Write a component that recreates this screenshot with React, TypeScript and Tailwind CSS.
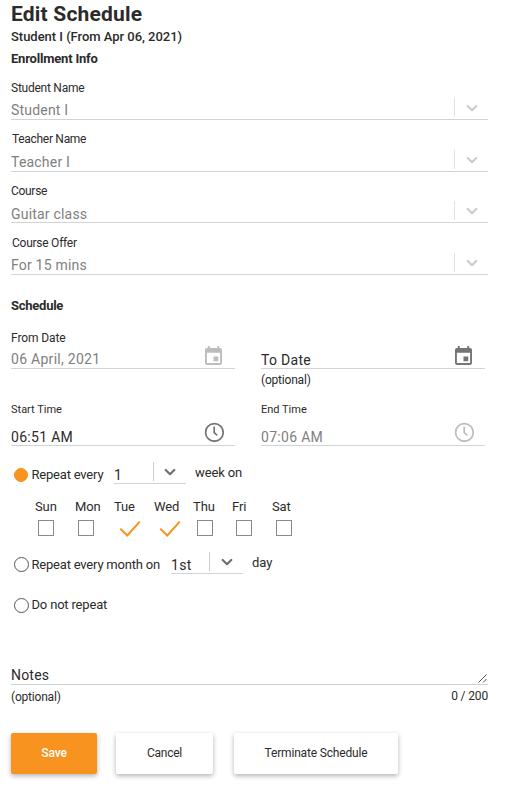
import { useState } from "react";
import clsx from "clsx";

const enrollment = [
  { label: "Student Name", value: "Student I", height: "h-[52px]", labelClass: "tracking-[-0.25px]", valueClass: "pt-[5px]" },
  { label: "Teacher Name", value: "Teacher I", height: "h-[52px]", labelClass: "-mt-px mb-px pl-px tracking-[-0.3px]", valueClass: "pt-[5px]" },
  { label: "Course", value: "Guitar class", height: "h-[51px]", labelClass: "tracking-[-0.3px]", valueClass: "pt-[7px]" },
  { label: "Course Offer", value: "For 15 mins", height: "h-[52px]", labelClass: "pl-px tracking-[-0.25px]", valueClass: "pt-[5px]" },
];

const weekDays = [
  { name: "Sun", label: "w-10", box: "pl-[3px]" },
  { name: "Mon", label: "w-[39px]", box: "pl-[3px]" },
  { name: "Tue", label: "w-10", box: "pl-[5px]" },
  { name: "Wed", label: "w-[39px]", box: "pl-[5px]" },
  { name: "Thu", label: "w-[39px]", box: "pl-1" },
  { name: "Fri", label: "w-10", box: "pl-1" },
  { name: "Sat", label: "w-10", box: "pl-1" },
];

function Chevron({ className }: { className?: string }) {
  return (
    <svg viewBox="0 0 12 8" className={clsx("w-3 h-2 shrink-0", className)} fill="none" stroke="currentColor" strokeWidth="2.2" strokeLinecap="round" strokeLinejoin="round">
      <path d="M1.7 2 L6 6.2 L10.3 2" />
    </svg>
  );
}

function CalendarIcon({ className }: { className: string }) {
  return (
    <svg viewBox="3 1 18 20" preserveAspectRatio="none" className={clsx("w-[17px] h-[19px]", className)} fill="currentColor">
      <path d="M17 12h-5v5h5v-5zM16 1v2H8V1H6v2H5c-1.11 0-1.99.9-1.99 2L3 19c0 1.1.89 2 2 2h14c1.1 0 2-.9 2-2V5c0-1.1-.9-2-2-2h-1V1h-2zm3 18H5V8h14v11z" />
    </svg>
  );
}

function ClockIcon({ className }: { className: string }) {
  return (
    <svg viewBox="0 0 20 20" className={clsx("size-5", className)} fill="none" stroke="currentColor" strokeWidth="1.7">
      <circle cx="10.4" cy="10.4" r="8.8" />
      <path d="M10.2 4.6 V10.6 L13.2 13.4" />
    </svg>
  );
}

function SelectField({ label, value, height, labelClass, valueClass }: (typeof enrollment)[number]) {
  return (
    <div className={clsx("flex flex-col justify-end", height)}>
      <label className={clsx("h-4 text-xs leading-4", labelClass)}>{label}</label>
      <div className="flex h-6 items-center border-b border-[#ced4da] text-[#808080]">
        <span className={clsx("flex-1 text-sm leading-[18px] tracking-[0.2px]", valueClass)}>{value}</span>
        <span className="h-[19px] w-px bg-[#e2e2e2]" />
        <span className="flex w-[33px] justify-center pt-px text-[#cccccc]"><Chevron /></span>
      </div>
    </div>
  );
}

function SmallSelect({ value, valueClass }: { value: string; valueClass: string }) {
  return (
    <div className="flex h-[22px] w-[72px] border-b border-[#ced4da]">
      <span className={clsx("shrink-0 pt-1 text-sm leading-[18px] tracking-[0.3px]", valueClass)}>{value}</span>
      <span className="h-[19px] w-px shrink-0 bg-[#cccccc]" />
      <span className="flex flex-1 justify-center pt-1.5 text-[#6f6f6f]"><Chevron /></span>
    </div>
  );
}

function Radio({ checked, onClick }: { checked: boolean; onClick: () => void }) {
  return (
    <button
      onClick={onClick}
      className={clsx(
        "ml-[3px] shrink-0 rounded-full border",
        checked ? "mr-[3.5px] size-3.5 border-[#f7931e] bg-[#f7931e]" : "mr-[2.5px] size-[15px] border-[#555555] bg-white"
      )}
    />
  );
}

export default function App() {
  const [repeat, setRepeat] = useState("week");
  const [days, setDays] = useState(["Tue", "Wed"]);

  const toggleDay = (day: string) =>
    setDays(days.includes(day) ? days.filter((d) => d !== day) : [...days, day]);

  return (
    <div className="h-[787px] w-[509px] overflow-hidden bg-white pl-[11px] pr-[21px] font-['Roboto',sans-serif] text-[#2b2b2b]">
      <h1 className="h-7 text-[21px] leading-7 font-bold tracking-[0.2px]">Edit Schedule</h1>
      <h2 className="h-[18px] text-[13px] leading-[18px] font-medium tracking-[-0.03px]">Student I (From Apr 06, 2021)</h2>
      <h3 className="mt-1 h-[18px] text-[13px] leading-[18px] font-bold tracking-[-0.2px]">Enrollment Info</h3>

      {enrollment.map((field) => <SelectField key={field.label} {...field} />)}

      <h3 className="mt-[22px] h-[18px] text-[13px] leading-[18px] font-bold tracking-[-0.25px]">Schedule</h3>

      <div className="mt-[15px] flex h-[71px] gap-[26px]">
        <div className="w-[224px]">
          <label className="block h-4 text-xs leading-4 tracking-[-0.1px]">From Date</label>
          <div className="flex h-[23px] justify-between border-b border-[#ced4da] pr-[13.5px] text-[#808080]">
            <span className="pt-1 text-sm leading-[18px] tracking-[0.28px]">06 April, 2021</span>
            <CalendarIcon className="text-[#bdbdbd]" />
          </div>
        </div>
        <div className="w-[224px]">
          <div className="mt-4 flex h-[23px] justify-between border-b border-[#ced4da] pr-[13.5px]">
            <span className="pt-[5px] text-sm leading-[18px] tracking-[0.3px]">To Date</span>
            <CalendarIcon className="text-[#757575]" />
          </div>
          <p className="mt-[3px] text-xs leading-4 tracking-[-0.2px]">(optional)</p>
        </div>
      </div>

      <div className="flex h-[45px] gap-[26px]">
        {[
          { label: "Start Time", value: "06:51 AM", text: "", icon: "text-[#757575]" },
          { label: "End Time", value: "07:06 AM", text: "text-[#808080]", icon: "text-[#bdbdbd]" },
        ].map((time) => (
          <div key={time.label} className="w-[224px]">
            <label className="block h-[21px] pt-px text-[11px] leading-4">{time.label}</label>
            <div className="flex h-6 justify-between border-b border-[#ced4da] pr-[11px]">
              <span className={clsx("pt-1.5 text-sm leading-[18px] tracking-[0.3px]", time.text)}>{time.value}</span>
              <ClockIcon className={time.icon} />
            </div>
          </div>
        ))}
      </div>

      <div className="mt-4 flex h-[22px] text-[13px] leading-[18px]">
        <div className="flex w-[103px] items-center pt-[3px] tracking-[-0.2px]">
          <Radio checked={repeat === "week"} onClick={() => setRepeat("week")} />
          Repeat every
        </div>
        <SmallSelect value="1" valueClass="w-[39px]" />
        <span className="pl-[9px] pt-0.5 tracking-[-0.12px]">week on</span>
      </div>

      <div className="mt-3.5 flex h-[39px] pl-6 text-[13px] leading-[18px]">
        {weekDays.map((day) => (
          <div key={day.name} className={clsx("shrink-0", day.label)}>
            <span className="block h-[22px] tracking-[-0.1px]">{day.name}</span>
            <button onClick={() => toggleDay(day.name)} className={clsx("block", day.box)}>
              {days.includes(day.name) ? (
                <svg viewBox="0 0 22 17" className="h-[17px] w-[22px]" fill="none" stroke="#f7931e" strokeWidth="2">
                  <path d="M1.3 8.8 L8.3 15.5 L20.7 1.6" />
                </svg>
              ) : (
                <span className="block size-4 border border-[#8a8a8a]" />
              )}
            </button>
          </div>
        ))}
      </div>

      <div className="mt-[15px] flex h-[22px] text-[13px] leading-[18px]">
        <div className="flex w-40 items-center pt-[3px] tracking-[-0.2px]">
          <Radio checked={repeat === "month"} onClick={() => setRepeat("month")} />
          Repeat every month on
        </div>
        <SmallSelect value="1st" valueClass="w-[38px]" />
        <span className="pl-[9px] pt-0.5">day</span>
      </div>

      <div className="mt-[22px] flex h-[18px] items-center text-[13px] leading-[18px] tracking-[-0.18px]">
        <Radio checked={repeat === "never"} onClick={() => setRepeat("never")} />
        Do not repeat
      </div>

      <div className="mt-[52px] flex h-[19px] items-end justify-between border-b border-[#ced0d0]">
        <span className="text-sm leading-[18px] tracking-[0.2px]">Notes</span>
        <svg viewBox="0 0 9 9" className="mb-px mr-px size-[9px]" fill="none" stroke="#555555" strokeWidth="1">
          <path d="M0.5 8.5 L8.5 0.5 M5 8.5 L8.5 5" />
        </svg>
      </div>
      <div className="flex h-12 justify-between pt-1 text-xs leading-4">
        <span className="tracking-[-0.2px]">(optional)</span>
        <span className="-mt-px tracking-[-0.15px]">0 / 200</span>
      </div>

      <div className="flex h-[41px] text-xs">
        <button className="w-[86px] rounded-xs bg-[#f7931e] pb-0.5 font-medium text-white tracking-[-0.1px] shadow-[0_2px_5px_rgba(0,0,0,0.3)]">Save</button>
        <button className="ml-[19px] w-[97px] rounded-xs bg-white pb-0.5 tracking-[-0.25px] shadow-[0_2px_5px_rgba(0,0,0,0.3)]">Cancel</button>
        <button className="ml-[21px] w-[164px] rounded-xs bg-white pb-0.5 tracking-[-0.17px] shadow-[0_2px_5px_rgba(0,0,0,0.3)]">Terminate Schedule</button>
      </div>
    </div>
  );
}
